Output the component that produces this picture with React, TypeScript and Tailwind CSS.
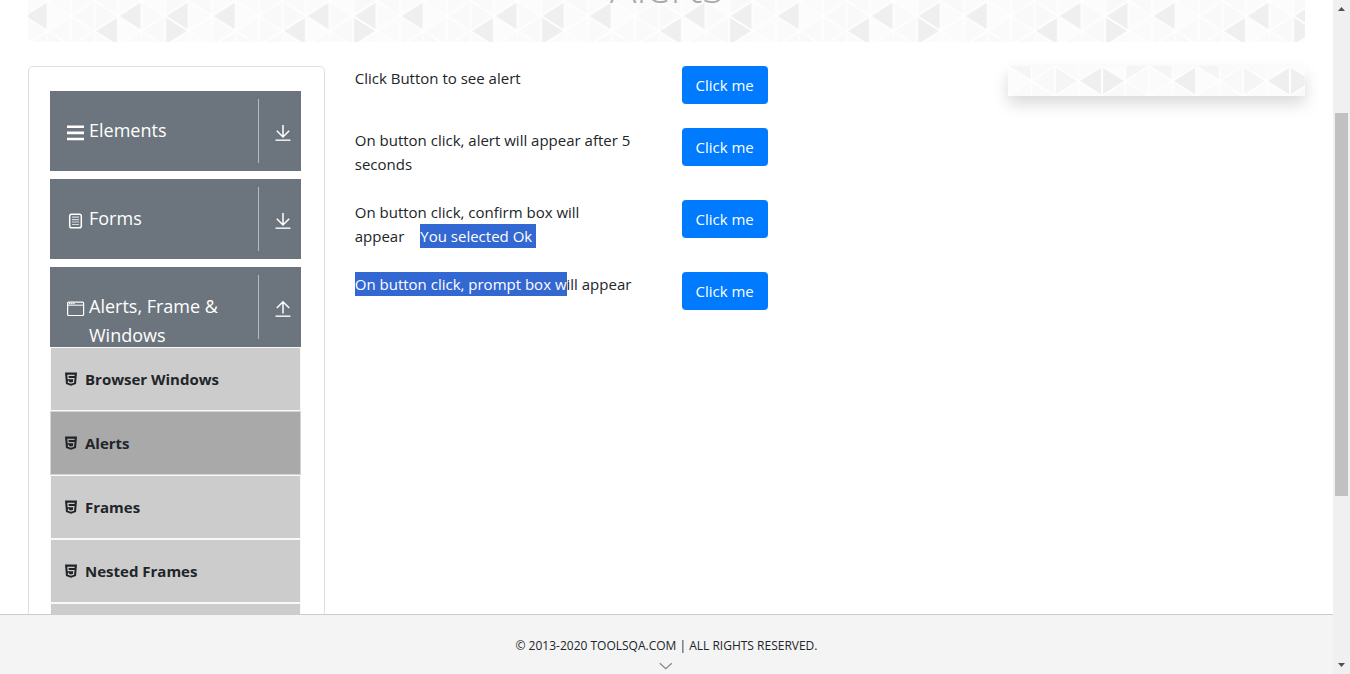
type Tri = { col: number; y: number; dir: "l" | "r"; fill: string };

function points(t: Tri) {
  const x0 = t.col * 23.5;
  const x1 = x0 + 23.5;
  return t.dir === "l"
    ? `${x0},${t.y} ${x1},${t.y - 15} ${x1},${t.y + 15}`
    : `${x1},${t.y} ${x0},${t.y - 15} ${x0},${t.y + 15}`;
}

// Every column alternates left and right pointing triangles, 15px apart.
const soft = ["#fbfbfb", "#f9f9f9", "#fbfbfb", "#fafafa", "#f9f9f9", "#fcfcfc", "#fafafa"];
function tile(top: number, dark: string[], mid: string[]): Tri[] {
  const out: Tri[] = [];
  for (let col = 0; col < 8; col++) {
    for (let row = 0; row < 5; row++) {
      const key = `${col}:${row}`;
      const shade = soft[(col * 3 + row * 5) % 7];
      out.push({
        col,
        y: top + row * 15,
        dir: (col + row) % 2 === 0 ? "l" : "r",
        fill: dark.includes(key) ? "#efefef" : mid.includes(key) ? "#f5f5f5" : shade,
      });
    }
  }
  return out;
}

function Triangles({ id, x, tris, className }: { id: string; x: number; tris: Tri[]; className: string }) {
  return (
    <svg className={className} aria-hidden="true">
      <defs>
        <pattern id={id} x={x} y="0" width="188" height="64" patternUnits="userSpaceOnUse">
          <rect width="188" height="64" fill="#fafafa" />
          {tris.map((t) => (
            <polygon key={`${t.col}-${t.y}`} points={points(t)} fill={t.fill} />
          ))}
          {tris.map((t) => (
            <polygon key={`${t.col}-${t.y}-edge`} points={points(t)} fill="none" stroke="#fefefe" strokeWidth="1.5" />
          ))}
        </pattern>
      </defs>
      <rect width="100%" height="100%" fill={`url(#${id})`} />
    </svg>
  );
}

const bannerTris = tile(1, ["3:1", "5:1", "5:2", "7:1", "2:2"], []);
const stripTris = tile(0, ["3:1", "4:1", "7:1"], ["5:0", "6:0", "0:0", "2:1"]);

function MenuIcon() {
  return (
    <svg viewBox="0 0 18 16" className="h-4 w-[18px] shrink-0" fill="#fff">
      <path d="M0 0.5h17v2.6h-17zM0 6.6h17v2.6h-17zM0 12.7h17v2.6h-17z" />
    </svg>
  );
}

function FormIcon() {
  return (
    <svg viewBox="0 0 18 16" className="h-4 w-[18px] shrink-0" fill="none" stroke="#fff">
      <rect x="2.7" y="1.2" width="11.6" height="13.5" rx="1.8" strokeWidth="1.5" />
      <path d="M5 4.2h7M5 6.6h7M5 9h7M5 11.5h7" strokeWidth="1.2" opacity="0.7" />
    </svg>
  );
}

function WindowIcon() {
  return (
    <svg viewBox="0 0 18 16" className="h-4 w-[18px] shrink-0" fill="none" stroke="#fff">
      <rect x="0.6" y="1.1" width="16" height="13.4" rx="1" strokeWidth="1.2" />
      <path d="M1 4.2h16" strokeWidth="1" />
      <path d="M2 2.7h6" strokeWidth="1.2" strokeDasharray="1.4 0.7" />
    </svg>
  );
}

function ArrowIcon({ up }: { up?: boolean }) {
  return (
    <svg viewBox="0 0 16 18" className="h-[18px] w-4" fill="none" stroke="#fff" strokeWidth="1.5">
      {up ? <path d="M8 13.5V2M1.8 8L8 1.8L14.2 8" /> : <path d="M8 1v12M1.8 6.8L8 13L14.2 6.8" />}
      <path d="M0.5 16.2h15" strokeWidth="1.6" opacity="0.85" />
    </svg>
  );
}

function Html5Icon({ active }: { active?: boolean }) {
  return (
    <svg viewBox="0 0 12 14" className="h-[14px] w-3 shrink-0">
      <path d="M0 0.4h12l-1 11.6L6 13.8l-5-1.8z" fill="#212529" />
      <path
        d="M9.6 3.4H2.9l0.3 3.2h5.7l-0.4 3.6L6 11l-2.5-0.8-0.1-1.5"
        fill="none"
        stroke={active ? "#a9a9a9" : "#ccc"}
        strokeWidth="1.2"
      />
    </svg>
  );
}

function GroupHeader({ icon, label, open }: { icon: React.ReactNode; label: string; open?: boolean }) {
  return (
    <button
      type="button"
      aria-expanded={!!open}
      className="flex h-20 w-full items-start overflow-hidden bg-[#6c757d] text-left text-white"
    >
      <span className="flex flex-1 items-start gap-1 pt-[25px] pl-[17px] text-[18px] leading-[29px]">
        <span className="flex h-[34px] items-center">{icon}</span>
        <span>{label}</span>
      </span>
      <span className="mt-2 flex h-16 w-[43px] items-center justify-center border-l border-[#b5babe] pt-1 pl-[7px]">
        <ArrowIcon up={open} />
      </span>
    </button>
  );
}

const items = ["Browser Windows", "Alerts", "Frames", "Nested Frames", "Modal Dialogs"];

function Sidebar() {
  return (
    <nav className="rounded-[5px] border border-[#dfdfdf] pt-6 pr-[23px] pl-[21px]">
      <div className="flex flex-col gap-2">
        <GroupHeader icon={<MenuIcon />} label="Elements" />
        <GroupHeader icon={<FormIcon />} label="Forms" />
        <div>
          <GroupHeader icon={<WindowIcon />} label="Alerts, Frame & Windows" open />
          <ul>
            {items.map((name) => (
              <li
                key={name}
                className={
                  name === "Alerts"
                    ? "h-16 border border-[#ced4da] bg-[#a9a9a9]"
                    : "h-16 border border-[#f8f9fa] bg-[#ccc]"
                }
              >
                <a href="#" className="flex h-full items-center gap-2 pl-[14px] text-[15px] font-bold text-[#212529]">
                  <Html5Icon active={name === "Alerts"} />
                  {name}
                </a>
              </li>
            ))}
          </ul>
        </div>
      </div>
    </nav>
  );
}

function Row({ children }: { children: React.ReactNode }) {
  return (
    <div className="grid grid-cols-2 gap-x-[30px]">
      <p>{children}</p>
      <div>
        <button type="button" className="h-[38px] rounded bg-[#007bff] px-[14px] text-white">
          Click me
        </button>
      </div>
    </div>
  );
}

export default function App() {
  return (
    <div className="flex h-screen overflow-hidden bg-white font-['Open_Sans',sans-serif] text-[15px] leading-6 text-[#212529]">
      <div className="flex min-w-0 flex-1 flex-col">
        <div className="min-h-0 flex-1 overflow-hidden px-7">
          <header className="relative h-[42px] overflow-hidden rounded-b-[5px]">
            <Triangles id="banner" x={19.5} tris={bannerTris} className="h-full w-full" />
            <h1 className="absolute inset-x-0 -top-[38px] text-center text-[44px] leading-[48px] font-light text-[#aaa]">
              Alerts
            </h1>
          </header>
          <div className="mt-6 grid grid-cols-4 items-start gap-x-[30px]">
            <Sidebar />
            <main className="col-span-2 flex flex-col gap-6">
              <Row>Click Button to see alert</Row>
              <Row>On button click, alert will appear after 5 seconds</Row>
              <Row>
                On button click, confirm box will
                <br />
                appear
                <span className="ml-4 inline-block bg-[#3367d1] pr-1 text-white">You selected Ok</span>
              </Row>
              <Row>
                <span className="inline-block bg-[#3367d1] text-white">On button click, prompt box w</span>ill appear
              </Row>
            </main>
            <aside className="h-[30px] shadow-[0_8px_16px_rgba(0,0,0,0.15)]">
              <Triangles id="strip" x={0} tris={stripTris} className="h-full w-full" />
            </aside>
          </div>
        </div>
        <footer className="flex h-[60px] shrink-0 flex-col items-center border-t border-[#ccc] bg-[#f4f4f4] pt-[19px] text-[12px]">
          <span>© 2013-2020 TOOLSQA.COM | ALL RIGHTS RESERVED.</span>
          <svg viewBox="0 0 16 8" className="mt-1 h-2 w-4" fill="none" stroke="#888" strokeWidth="1.3">
            <path d="M0.8 1.2l6 5.5l6-5.5" />
          </svg>
        </footer>
      </div>
      <div className="flex w-[17px] flex-col items-center bg-[#f0f0f0]">
        <svg viewBox="0 0 7 4" className="mt-[7px] h-1 w-[7px]" fill="#505050">
          <path d="M0 4L3.5 0L7 4z" />
        </svg>
        <div className="mt-[102px] h-[383px] w-[13px] bg-[#c1c1c1]" />
        <svg viewBox="0 0 7 4" className="mt-auto mb-[7px] h-1 w-[7px]" fill="#505050">
          <path d="M0 0L3.5 4L7 0z" />
        </svg>
      </div>
    </div>
  );
}
